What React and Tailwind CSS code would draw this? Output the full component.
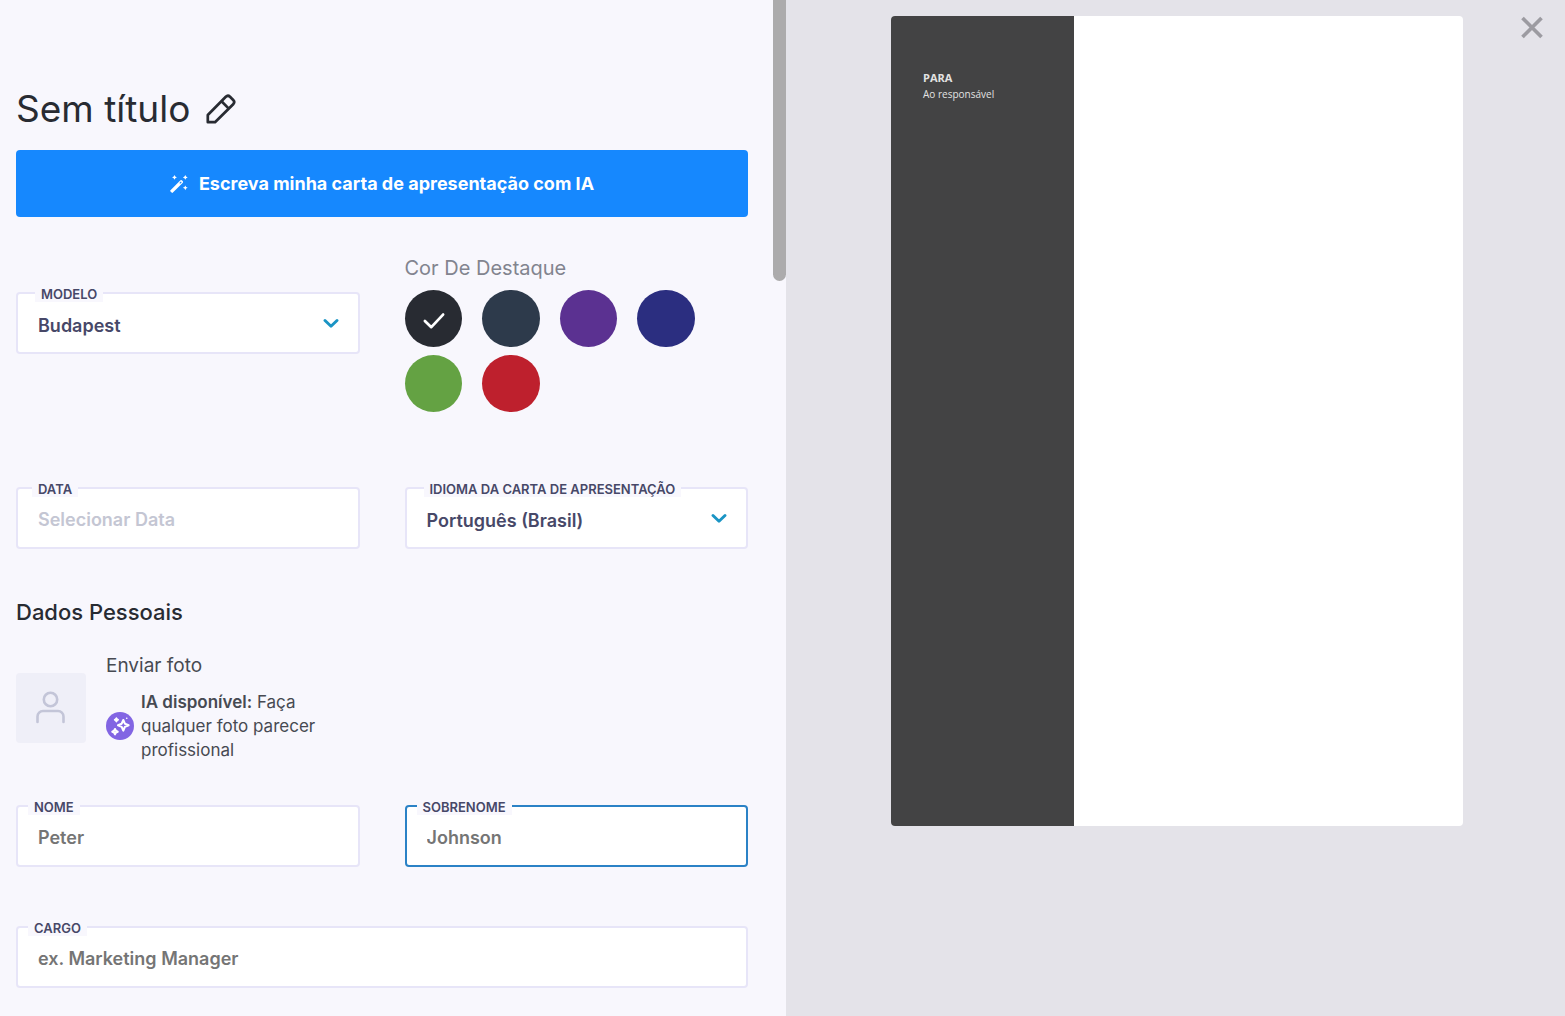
import React, { useState } from "react";

const colors = [
  { name: "Preto", className: "bg-[#282b32]" },
  { name: "Azul petróleo", className: "bg-[#2d3a4b]" },
  { name: "Roxo", className: "bg-[#5b3191]" },
  { name: "Azul", className: "bg-[#2b2e80]" },
  { name: "Verde", className: "bg-[#64a243]" },
  { name: "Vermelho", className: "bg-[#be202d]" },
];

const PencilIcon = () => (
  <svg className="w-[30px] h-[30px]" viewBox="0 0 30 30" fill="none" stroke="currentColor" strokeWidth="2.7" strokeLinejoin="round">
    <path d="M1.8 28.2V21L19.8 2.8a3 3 0 0 1 4.2 0l3.2 3.2a3 3 0 0 1 0 4.2L9 28.2z" />
    <path d="M15.5 7.3l7.3 7.3" />
  </svg>
);

const WandIcon = () => (
  <svg className="w-[18px] h-[18px]" viewBox="0 0 18 18" fill="currentColor">
    <path
      fillRule="evenodd"
      d="M.5 15.2L10.2 5.5a1.3 1.3 0 0 1 1.9 0l.5.5a1.3 1.3 0 0 1 0 1.9L2.9 17.6a.9.9 0 0 1-1.3 0L.5 16.5a.9.9 0 0 1 0-1.3zM9.4 8l.8.8 1.5-1.5-.8-.8z"
    />
    <path d="M4.500 0l.8 1.600 1.600.8-1.600.8-.8 1.600-.8-1.600-1.600-.8 1.600-.8zM15.300 0l.8 1.600 1.600.8-1.600.8-.8 1.600-.8-1.600-1.600-.8 1.600-.8zM15.300 10.400l.8 1.600 1.600.8-1.600.8-.8 1.600-.8-1.600-1.600-.8 1.600-.8z" />
  </svg>
);

const ChevronIcon = () => (
  <svg
    className="absolute right-[21px] top-[26px] w-4 h-3 text-[#1a94c4] pointer-events-none"
    viewBox="0 0 16 12"
    fill="none"
    stroke="currentColor"
    strokeWidth="2.9"
    strokeLinecap="round"
    strokeLinejoin="round"
  >
    <path d="M2 2.500l6 5.800 6-5.800" />
  </svg>
);

const UserIcon = () => (
  <svg className="w-8 h-9 text-[#c3c5d8]" viewBox="0 0 32 36" fill="none" stroke="currentColor" strokeWidth="2.6" strokeLinecap="round">
    <circle cx="15.500" cy="9.500" r="6.700" />
    <path d="M2.500 32v-5.500a5.500 5.500 0 0 1 5.500-5.500h15a5.500 5.500 0 0 1 5.500 5.500v5.500" />
  </svg>
);

const SparkleIcon = () => (
  <svg className="w-7 h-7 shrink-0" viewBox="0 0 28 28">
    <circle cx="14" cy="14" r="14" fill="#8265e3" />
    <g fill="none" stroke="#fff" strokeWidth="2.1" strokeLinejoin="round">
      <path d="M17.3 8l1.6 3.7 3.700 1.600-3.700 1.600-1.600 3.700-1.600-3.700-3.700-1.600 3.700-1.600z" />
      <path d="M9 17l.9 1.800 1.800.9-1.800.9-.9 1.800-.9-1.800-1.800-.9 1.800-.9z" />
    </g>
    <path d="M10.4 5.800l.9 1.100 1.100.9-1.100.9-.9 1.100-.9-1.100-1.100-.9 1.100-.9z" fill="#fff" stroke="#fff" strokeWidth="1.2" strokeLinejoin="round" />
    <path d="M20.700 6.200h.1" stroke="#fff" strokeWidth="1.600" strokeLinecap="round" />
  </svg>
);

const fieldClass =
  "block w-full h-[62px] px-5 rounded-sm border-2 bg-white text-lg font-semibold outline-none appearance-none text-[#474868]";

const FieldLabel = ({ id, children, inset = "left-3" }) => (
  <label
    htmlFor={id}
    className={`absolute -top-1.5 ${inset} z-10 px-1.5 bg-[#f8f7fd] text-[13px] leading-4 font-semibold uppercase text-[#474868]`}
  >
    {children}
  </label>
);

const TextField = ({ id, label, placeholder, inset, active, muted }) => (
  <div className="relative">
    <FieldLabel id={id} inset={inset}>
      {label}
    </FieldLabel>
    <input
      id={id}
      type="text"
      placeholder={placeholder}
      className={`${fieldClass} pt-0.5 ${active ? "border-[#2b82c6]" : "border-[#e7e5f8]"} ${
        muted ? "placeholder:text-[#c4c6d3]" : "placeholder:text-[#757575]"
      }`}
    />
  </div>
);

const SelectField = ({ id, label, options }) => (
  <div className="relative">
    <FieldLabel id={id} inset="left-[19px]">
      {label}
    </FieldLabel>
    <select id={id} className={`${fieldClass} pt-1.5 border-[#e7e5f8]`}>
      {options.map((option) => (
        <option key={option}>{option}</option>
      ))}
    </select>
    <ChevronIcon />
  </div>
);

const ColorPicker = () => {
  const [selected, setSelected] = useState(0);

  return (
    <fieldset>
      <legend className="text-[20px] leading-[26px] text-[#82848f]">Cor De Destaque</legend>
      <div className="grid grid-cols-4 gap-x-5 gap-y-2 w-[290px] mt-[9px]">
        {colors.map((color, i) => (
          <label key={color.name} className="relative block h-[57px]">
            <input
              type="radio"
              name="accent"
              aria-label={color.name}
              checked={selected === i}
              onChange={() => setSelected(i)}
              className={`block w-full h-full appearance-none rounded-full cursor-pointer ${color.className}`}
            />
            {selected === i && (
              <svg
                className="absolute inset-0 w-full h-full text-white pointer-events-none"
                viewBox="0 0 58 58"
                fill="none"
                stroke="currentColor"
                strokeWidth="2.8"
                strokeLinecap="round"
                strokeLinejoin="round"
              >
                <path d="M20 31.500l6.500 6.300L38.500 25" />
              </svg>
            )}
          </label>
        ))}
      </div>
    </fieldset>
  );
};

const Preview = () => (
  <section className="flex justify-center items-start pt-4 pl-[3px] bg-[#e4e3e9] relative">
    <div className="flex w-[73.7%] aspect-[572/810] rounded-sm overflow-hidden bg-white">
      <div className="w-[32%] pt-[54px] pl-8 bg-[#434344] text-[#e2e2e2] font-['Open_Sans',sans-serif] leading-4">
        <h2 className="text-[11px] leading-4 font-bold">PARA</h2>
        <p className="text-[10px] leading-4">Ao responsável</p>
      </div>
    </div>
    <button type="button" aria-label="Fechar" className="absolute top-4 right-[21px] text-[#9c9ba1] cursor-pointer">
      <svg className="w-6 h-6" viewBox="0 0 24 24" fill="none" stroke="currentColor" strokeWidth="3.7">
        <path d="M2.500 2l19 19M21.500 2l-19 19" />
      </svg>
    </button>
  </section>
);

const App = () => {
  return (
    <div className="grid grid-cols-[786fr_779fr] h-screen overflow-hidden font-['Inter',sans-serif]">
      <div className="flex min-h-0 overflow-hidden bg-[#f8f7fd]">
        <main className="flex-1 pt-[84px] pl-4 pr-[25px]">
          <div className="flex items-center gap-4 h-[50px] text-[#282b32]">
            <h1 className="text-[37px] leading-[50px]">Sem título</h1>
            <button type="button" aria-label="Editar título" className="cursor-pointer">
              <PencilIcon />
            </button>
          </div>

          <button
            type="button"
            className="flex items-center justify-center gap-[11px] w-full h-[67px] mt-4 rounded-sm bg-[#1688fe] text-white text-lg font-bold cursor-pointer"
          >
            <WandIcon />
            Escreva minha carta de apresentação com IA
          </button>

          <div className="grid grid-cols-2 gap-x-[45px] mt-[38px]">
            <div className="pt-[37px]">
              <SelectField id="modelo" label="Modelo" options={["Budapest"]} />
            </div>
            <ColorPicker />
          </div>

          <div className="grid grid-cols-2 gap-x-[45px] mt-[75px]">
            <TextField id="data" label="Data" placeholder="Selecionar Data" inset="left-4" muted />
            <SelectField id="idioma" label="Idioma da carta de apresentação" options={["Português (Brasil)"]} />
          </div>

          <h2 className="mt-[47px] text-[22px] leading-8 font-medium text-[#282b32]">Dados Pessoais</h2>

          <div className="flex items-center gap-5 mt-[25px]">
            <div className="flex items-center justify-center w-[70px] h-[70px] rounded-sm bg-[#efeff8]">
              <UserIcon />
            </div>
            <div className="text-[#474a52]">
              <p className="text-[19px] leading-[26px]">Enviar foto</p>
              <div className="flex items-center gap-[7px] w-[230px] mt-[11px]">
                <SparkleIcon />
                <p className="text-[17px] leading-6">
                  <strong className="font-semibold">IA disponível:</strong> Faça qualquer foto parecer profissional
                </p>
              </div>
            </div>
          </div>

          <div className="grid grid-cols-2 gap-x-[45px] gap-y-[59px] mt-[43px]">
            <TextField id="nome" label="Nome" placeholder="Peter" />
            <TextField id="sobrenome" label="Sobrenome" placeholder="Johnson" active />
            <div className="col-span-2">
              <TextField id="cargo" label="Cargo" placeholder="ex. Marketing Manager" />
            </div>
          </div>
        </main>
        <div className="w-[13px] shrink-0">
          <div className="w-full h-[27.7%] rounded-b-full bg-[#acabac]" />
        </div>
      </div>
      <Preview />
    </div>
  );
};

export default App;
